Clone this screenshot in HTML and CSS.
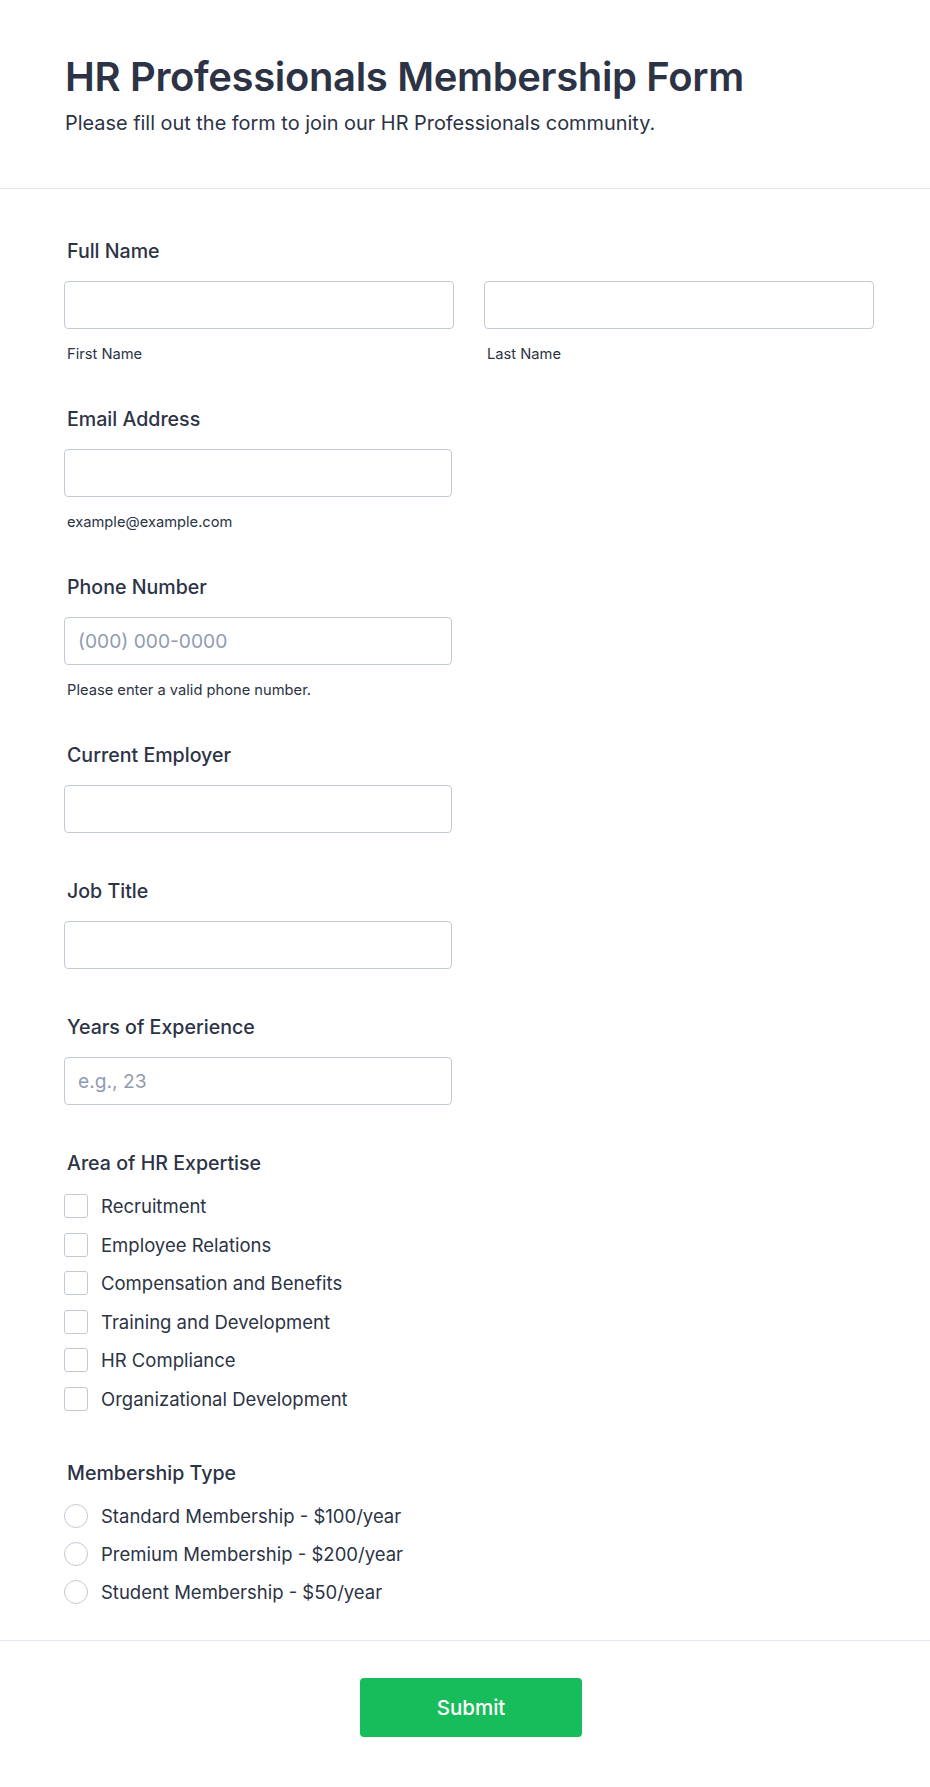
FILE: index.html
```html
<!DOCTYPE html>
<html lang="en">
<head>
<meta charset="utf-8">
<title>HR Professionals Membership Form</title>
<link rel="stylesheet" href="styles.css">
</head>
<body>
<div class="page">
  <header class="form-header">
    <h1 class="form-title">HR Professionals Membership Form</h1>
    <p class="form-subtitle">Please fill out the form to join our HR Professionals community.</p>
  </header>

  <form class="form-body">
    <div class="field">
      <label class="field-label">Full Name</label>
      <div class="name-grid">
        <div class="name-col">
          <input class="text-input" type="text">
          <span class="sublabel">First Name</span>
        </div>
        <div class="name-col">
          <input class="text-input" type="text">
          <span class="sublabel">Last Name</span>
        </div>
      </div>
    </div>

    <div class="field">
      <label class="field-label">Email Address</label>
      <input class="text-input single" type="email">
      <span class="sublabel">example@example.com</span>
    </div>

    <div class="field">
      <label class="field-label">Phone Number</label>
      <input class="text-input single" type="tel" placeholder="(000) 000-0000">
      <span class="sublabel">Please enter a valid phone number.</span>
    </div>

    <div class="field">
      <label class="field-label">Current Employer</label>
      <input class="text-input single" type="text">
    </div>

    <div class="field">
      <label class="field-label">Job Title</label>
      <input class="text-input single" type="text">
    </div>

    <div class="field">
      <label class="field-label">Years of Experience</label>
      <input class="text-input single" type="text" placeholder="e.g., 23">
    </div>

    <div class="field">
      <label class="field-label">Area of HR Expertise</label>
      <div class="options checks">
        <label class="option"><span class="box"></span><span class="option-text">Recruitment</span></label>
        <label class="option"><span class="box"></span><span class="option-text">Employee Relations</span></label>
        <label class="option"><span class="box"></span><span class="option-text">Compensation and Benefits</span></label>
        <label class="option"><span class="box"></span><span class="option-text">Training and Development</span></label>
        <label class="option"><span class="box"></span><span class="option-text">HR Compliance</span></label>
        <label class="option"><span class="box"></span><span class="option-text">Organizational Development</span></label>
      </div>
    </div>

    <div class="field last">
      <label class="field-label">Membership Type</label>
      <div class="options radios">
        <label class="option"><span class="circle"></span><span class="option-text">Standard Membership - $100/year</span></label>
        <label class="option"><span class="circle"></span><span class="option-text">Premium Membership - $200/year</span></label>
        <label class="option"><span class="circle"></span><span class="option-text">Student Membership - $50/year</span></label>
      </div>
    </div>
  </form>

  <footer class="form-footer">
    <button class="submit-btn" type="button">Submit</button>
  </footer>
</div>
</body>
</html>
```

FILE: styles.css
```css
* {
  box-sizing: border-box;
}

html, body {
  margin: 0;
  padding: 0;
  background: #ffffff;
}

body {
  font-family: Inter, "Noto Sans", "Liberation Sans", sans-serif;
  color: #2c3345;
}

.page {
  width: 930px;
  min-height: 1787px;
}

.form-header {
  padding: 53px 64px 51px 65px;
  border-bottom: 1px solid #e3e5ec;
}

.form-title {
  margin: 0;
  font-size: 40px;
  line-height: 48px;
  font-weight: 600;
  color: #2c3345;
  letter-spacing: -0.35px;
}

.form-subtitle {
  margin: 8px 0 0;
  font-size: 19.9px;
  line-height: 28px;
  font-weight: 400;
  color: #2c3345;
}

.form-body {
  padding: 50px 56px 0 64px;
  border-bottom: 1px solid #e6e8f0;
}

.field {
  display: flex;
  flex-direction: column;
  margin-bottom: 46px;
}

.field.last {
  margin-bottom: 34px;
}

.field-label {
  font-size: 19.6px;
  line-height: 24px;
  font-weight: 500;
  margin: 0 0 18px 3px;
  color: #2c3345;
}

.name-grid {
  display: grid;
  grid-template-columns: 390px 390px;
  column-gap: 30px;
}

.name-col {
  display: flex;
  flex-direction: column;
}

.text-input {
  display: block;
  width: 100%;
  height: 48px;
  border: 1px solid #c3c8d6;
  border-radius: 4px;
  background: #ffffff;
  padding: 0 13px;
  font-family: inherit;
  font-size: 19.2px;
  color: #2c3345;
  outline: none;
}

.text-input.single {
  width: 388px;
}

.text-input::placeholder {
  color: #8f9bb3;
  opacity: 1;
}

.sublabel {
  display: block;
  margin: 18px 0 0 3px;
  font-size: 14.7px;
  line-height: 14px;
  color: #2c3345;
}

.options {
  display: flex;
  flex-direction: column;
  gap: 10.6px;
}

.checks {
  margin-top: -1px;
  margin-bottom: 2px;
}

.radios {
  gap: 10px;
  margin-top: -1px;
}

.option {
  display: flex;
  align-items: center;
  height: 28px;
  gap: 13px;
}

.option-text {
  font-size: 18.5px;
  line-height: 28px;
  color: #2c3345;
}

.box {
  width: 24px;
  height: 24px;
  flex: none;
  border: 1px solid #c3c8d6;
  border-radius: 3px;
  background: #ffffff;
}

.circle {
  width: 24px;
  height: 24px;
  flex: none;
  border: 1px solid #c3c8d6;
  border-radius: 50%;
  background: #ffffff;
}

.form-footer {
  display: flex;
  justify-content: center;
  padding: 37px 0 50px 12px;
}

.submit-btn {
  width: 222px;
  height: 59px;
  border: none;
  border-radius: 4px;
  background: #18bd5b;
  color: #ffffff;
  font-family: inherit;
  font-size: 20.5px;
  font-weight: 500;
}
```
